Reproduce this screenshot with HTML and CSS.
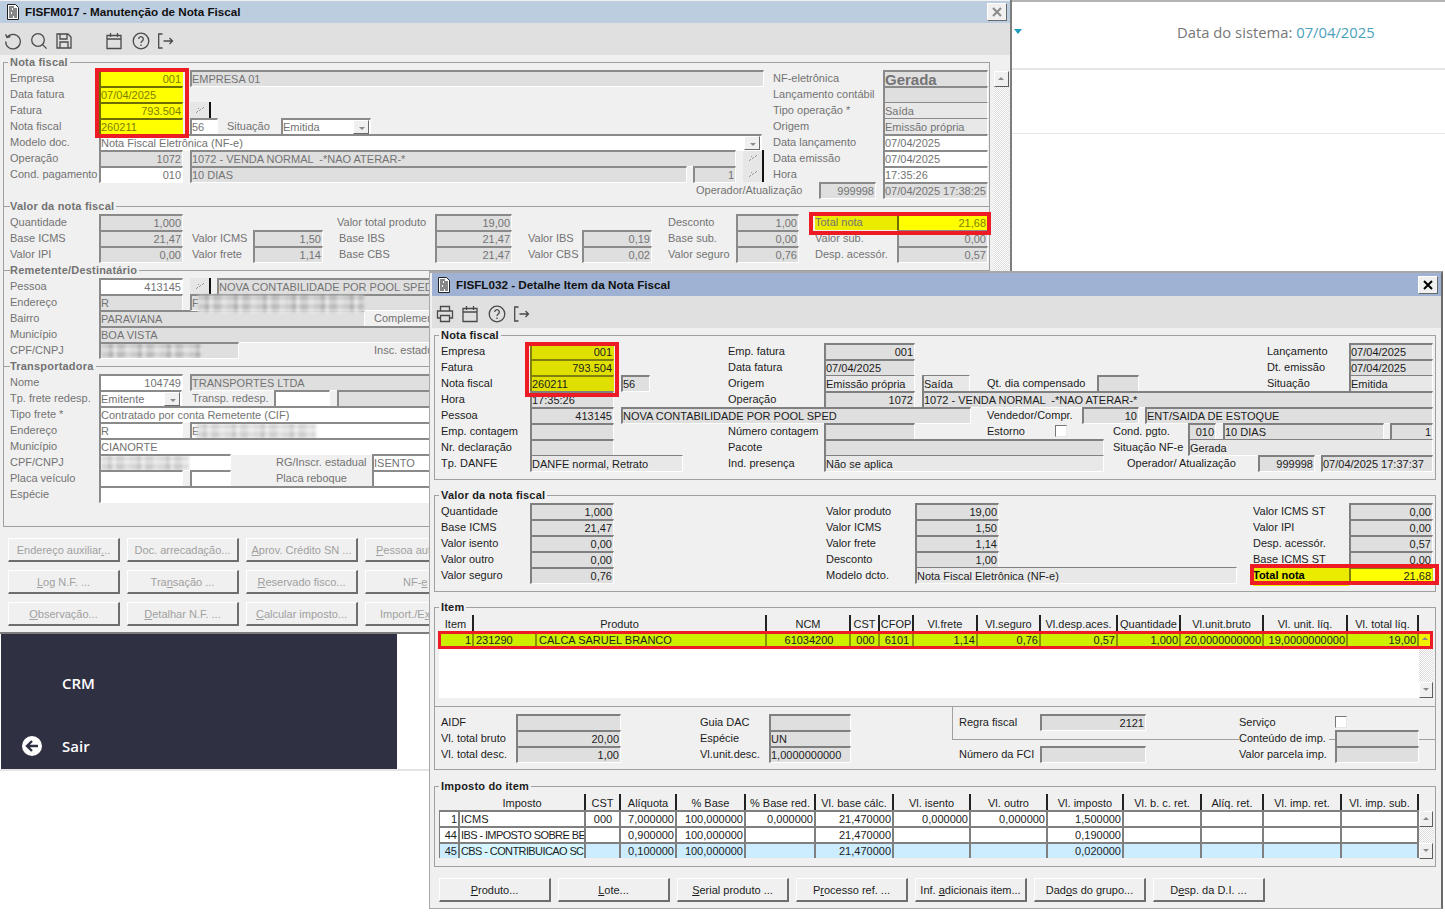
FILE: index.html
```html
<!DOCTYPE html>
<html>
<head>
    <meta charset="UTF-8">
    <title>FISFM017 - Manutenção de Nota Fiscal</title>
    <link rel="stylesheet" href="styles.css">
</head>
<body>
<div class="desktop">

    <!-- portal behind the windows -->
    <div class="portal">
        <div class="portal-head">
            <i class="caret"></i>
            <span class="sys-date">Data do sistema: <b>07/04/2025</b></span>
        </div>
        <div class="portal-line"></div>
    </div>
    <div class="menu">
        <div class="menu-item">CRM</div>
        <div class="menu-item">
            <svg class="back" viewBox="0 0 20 20"><circle cx="10" cy="10" r="10" fill="#fff"/><path d="M16 10H5M10 5l-5 5 5 5" fill="none" stroke="#2f3042" stroke-width="2.4"/></svg>
            Sair
        </div>
    </div>
    <div class="menu-rule"></div>

    <!-- FISFM017 -->
    <section class="win win-back">
        <div class="title">
            <svg class="doc" viewBox="0 0 12 16"><path d="M.5.5h8l3 3v12H.5z" fill="#fff" stroke="#222"/><path d="M2 3h5M2 5h3M6 5h4M2 7h8M2 9h2M5 9h5M2 11h8M2 13h4M7 13h3" stroke="#111" stroke-width="1.2"/></svg>
            <span>FISFM017 - Manutenção de Nota Fiscal</span>
            <button class="close">
                <svg viewBox="0 0 10 10"><path d="M1 1l8 8M9 1l-8 8" stroke="#8a8a8a" stroke-width="2"/></svg>
            </button>
        </div>
        <div class="tools">
            <svg class="ico" viewBox="0 0 18 18"><path d="M3.2 5.2A7.3 7.3 0 1 1 1.7 9.5M1.600 2.200l1.400 3.400 3.400-.9"/></svg>
            <svg class="ico" viewBox="0 0 18 18"><circle cx="8" cy="8" r="6.300"/><path d="M12.600 12.600l4 4"/></svg>
            <svg class="ico" viewBox="0 0 18 18"><path d="M1 2h11l3 3v11H1zM4 2v5h7V2M4 16v-6h8v6"/></svg>
            <svg class="ico gap-l" viewBox="0 0 18 18"><path d="M1 3.500h14v13H1zM1 7h14M4.500 1v4M11.500 1v4"/></svg>
            <svg class="ico" viewBox="0 0 18 18"><circle cx="9" cy="9" r="7.800"/><path d="M6.700 7a2.300 2.300 0 1 1 3.500 2c-.9.6-1.200 1-1.200 2M9 12.500v1.500"/></svg>
            <svg class="ico" viewBox="0 0 18 18"><path d="M4.500 2H.7v14h3.800M5.500 9h9M11.500 6l3 3-3 3"/></svg>
        </div>
        <div class="back-body">
            <div class="back-main">
                <fieldset class="box box-nf">
                    <legend>Nota fiscal</legend>
                    <div class="row"><span class="w-89">Empresa</span><span class="f yl r w-84">001</span><span class="f ml-7 w-574">EMPRESA 01</span><span class="rc w-110">NF-eletrônica</span><span class="f big w-105">Gerada</span></div>
                    <div class="row"><span class="w-89">Data fatura</span><span class="f yl w-84">07/04/2025</span><span class="rc w-110">Lançamento contábil</span><span class="f w-105"></span></div>
                    <div class="row"><span class="w-89">Fatura</span><span class="f yl r w-84">793.504</span><button class="pick ml-7"><svg viewBox="0 0 10 8"><path d="M1 7l2-2M4 5l2-2M7 3l2-2M3 3l1-1"/></svg></button><span class="rc w-110">Tipo operação *</span><span class="f lt w-105">Saída</span></div>
                    <div class="row"><span class="w-89">Nota fiscal</span><span class="f yl w-84">260211</span><span class="f wh ml-7 w-28">56</span><span class="ml-9 w-54">Situação</span><span class="f wh combo w-90">Emitida<i class="dd"></i></span><span class="rc w-110">Origem</span><span class="f lt w-105">Emissão própria</span></div>
                    <div class="row"><span class="w-89">Modelo doc.</span><span class="f wh combo w-663">Nota Fiscal Eletrônica (NF-e)<i class="dd"></i></span><span class="rc w-110">Data lançamento</span><span class="f wh w-105">07/04/2025</span></div>
                    <div class="row"><span class="w-89">Operação</span><span class="f r w-84">1072</span><span class="f ml-7 w-546">1072 - VENDA NORMAL  -*NAO ATERAR-*</span><button class="pick ml-7"><svg viewBox="0 0 10 8"><path d="M1 7l2-2M4 5l2-2M7 3l2-2M3 3l1-1"/></svg></button><span class="rc w-110">Data emissão</span><span class="f wh w-105">07/04/2025</span></div>
                    <div class="row"><span class="w-89">Cond. pagamento</span><span class="f wh r w-84">010</span><span class="f ml-7 w-497">10 DIAS</span><span class="f r ml-6 w-43">1</span><button class="pick ml-7"><svg viewBox="0 0 10 8"><path d="M1 7l2-2M4 5l2-2M7 3l2-2M3 3l1-1"/></svg></button><span class="rc w-110">Hora</span><span class="f wh w-105">17:35:26</span></div>
                    <div class="row end"><span class="w-123">Operador/Atualização</span><span class="f r w-57">999998</span><span class="f ml-7 w-105">07/04/2025 17:38:25</span></div>

                    <div class="sect">Valor da nota fiscal</div>
                    <div class="row"><span class="w-89">Quantidade</span><span class="f r w-84">1,000</span><span class="ml-154 w-98">Valor total produto</span><span class="f r w-77">19,00</span><span class="ml-156 w-68">Desconto</span><span class="f r w-63">1,00</span><span class="ml-16 w-82 hl">Total nota</span><span class="f yl r w-91">21,68</span></div>
                    <div class="row"><span class="w-89">Base ICMS</span><span class="f r w-84">21,47</span><span class="ml-9 w-61">Valor ICMS</span><span class="f r w-70">1,50</span><span class="ml-16 w-96">Base IBS</span><span class="f r w-77">21,47</span><span class="ml-16 w-54">Valor IBS</span><span class="f r w-70">0,19</span><span class="ml-16 w-68">Base sub.</span><span class="f r w-63">0,00</span><span class="ml-16 w-82">Valor sub.</span><span class="f r w-91">0,00</span></div>
                    <div class="row"><span class="w-89">Valor IPI</span><span class="f r w-84">0,00</span><span class="ml-9 w-61">Valor frete</span><span class="f r w-70">1,14</span><span class="ml-16 w-96">Base CBS</span><span class="f r w-77">21,47</span><span class="ml-16 w-54">Valor CBS</span><span class="f r w-70">0,02</span><span class="ml-16 w-68">Valor seguro</span><span class="f r w-63">0,76</span><span class="ml-16 w-82">Desp. acessór.</span><span class="f r w-91">0,57</span></div>

                    <div class="sect">Remetente/Destinatário</div>
                    <div class="row"><span class="w-89">Pessoa</span><span class="f wh r w-84">413145</span><button class="pick ml-7"><svg viewBox="0 0 10 8"><path d="M1 7l2-2M4 5l2-2M7 3l2-2M3 3l1-1"/></svg></button><span class="f ml-6 w-547">NOVA CONTABILIDADE POR POOL SPED</span></div>
                    <div class="row"><span class="w-89">Endereço</span><span class="f w-84">R</span><span class="f open ml-7 w-574">F<i class="smear sm-a"></i></span></div>
                    <div class="row"><span class="w-89">Bairro</span><span class="f w-266">PARAVIANA</span><span class="ml-9 w-55">Complemen</span></div>
                    <div class="row"><span class="w-89">Município</span><span class="f w-665">BOA VISTA</span></div>
                    <div class="row"><span class="w-89">CPF/CNPJ</span><span class="f w-140"><i class="smear sm-b"></i></span><span class="ml-135 w-55">Insc. estadu</span></div>

                    <div class="sect">Transportadora</div>
                    <div class="row"><span class="w-89">Nome</span><span class="f wh r w-84">104749</span><span class="f ml-7 w-574">TRANSPORTES LTDA</span></div>
                    <div class="row"><span class="w-89">Tp. frete redesp.</span><span class="f wh combo w-83">Emitente<i class="dd"></i></span><span class="ml-10 w-82">Transp. redesp.</span><span class="f wh w-56"></span><span class="f ml-7 w-427"></span></div>
                    <div class="row"><span class="w-89">Tipo frete *</span><span class="f wh combo w-665">Contratado por conta Remetente (CIF)</span></div>
                    <div class="row"><span class="w-89">Endereço</span><span class="f wh w-84">R</span><span class="f wh ml-7 w-574">E<i class="smear sm-c"></i></span></div>
                    <div class="row"><span class="w-89">Município</span><span class="f wh w-665">CIANORTE</span></div>
                    <div class="row"><span class="w-89">CPF/CNPJ</span><span class="f wh w-132"><i class="smear sm-d"></i></span><span class="ml-45 w-96">RG/Inscr. estadual</span><span class="f wh w-392">ISENTO</span></div>
                    <div class="row"><span class="w-89">Placa veículo</span><span class="f wh w-84"></span><span class="f wh ml-7 w-41"></span><span class="ml-45 w-96">Placa reboque</span><span class="f wh w-392"></span></div>
                    <div class="row"><span class="w-89">Espécie</span><span class="f wh w-665"></span></div>
                </fieldset>

                <div class="btns btns-back">
                    <button class="btn">Endereço auxiliar<u>.</u>..</button>
                    <button class="btn">Doc. arrecada<u>ç</u>ão...</button>
                    <button class="btn"><u>A</u>prov. Crédito SN ...</button>
                    <button class="btn pl-10"><u>P</u>essoa aut</button>
                    <button class="btn"><u>L</u>og N.F. ...</button>
                    <button class="btn">Tra<u>n</u>sação ...</button>
                    <button class="btn"><u>R</u>eservado fisco...</button>
                    <button class="btn pl-37">NF-<u>e</u></button>
                    <button class="btn"><u>O</u>bservação...</button>
                    <button class="btn"><u>D</u>etalhar N.F. ...</button>
                    <button class="btn"><u>C</u>alcular imposto...</button>
                    <button class="btn pl-14">Import./E<u>x</u>p</button>
                </div>
            </div>
            <div class="sb sb-back">
                <i class="sb-btn up"></i>
            </div>
        </div>
    </section>

    <!-- FISFL032 -->
    <section class="win win-front">
        <div class="title">
            <svg class="doc" viewBox="0 0 12 16"><path d="M.5.5h8l3 3v12H.5z" fill="#fff" stroke="#222"/><path d="M2 3h5M2 5h3M6 5h4M2 7h8M2 9h2M5 9h5M2 11h8M2 13h4M7 13h3" stroke="#111" stroke-width="1.2"/></svg>
            <span>FISFL032 - Detalhe Item da Nota Fiscal</span>
            <button class="close">
                <svg viewBox="0 0 10 10"><path d="M1 1l8 8M9 1l-8 8" stroke="#000" stroke-width="2"/></svg>
            </button>
        </div>
        <div class="tools">
            <svg class="ico" viewBox="0 0 18 18"><path d="M4.500 6V1.500h9V6M4 13H1.500V6h15v7H14M4.500 10.500h9v6h-9z"/></svg>
            <svg class="ico" viewBox="0 0 18 18"><path d="M1 3.500h14v13H1zM1 7h14M4.500 1v4M11.500 1v4"/></svg>
            <svg class="ico" viewBox="0 0 18 18"><circle cx="9" cy="9" r="7.800"/><path d="M6.700 7a2.300 2.300 0 1 1 3.500 2c-.9.6-1.200 1-1.200 2M9 12.500v1.500"/></svg>
            <svg class="ico" viewBox="0 0 18 18"><path d="M4.500 2H.7v14h3.800M5.500 9h9M11.500 6l3 3-3 3"/></svg>
        </div>

        <fieldset class="box box-f1">
            <legend>Nota fiscal</legend>
            <div class="row"><span class="w-89">Empresa</span><span class="f yl r w-84">001</span><span class="ml-114 w-96">Emp. fatura</span><span class="f r w-91">001</span><span class="ml-352 w-82">Lançamento</span><span class="f w-84">07/04/2025</span></div>
            <div class="row"><span class="w-89">Fatura</span><span class="f yl r w-84">793.504</span><span class="ml-114 w-96">Data fatura</span><span class="f w-91">07/04/2025</span><span class="ml-352 w-82">Dt. emissão</span><span class="f w-84">07/04/2025</span></div>
            <div class="row"><span class="w-89">Nota fiscal</span><span class="f yl w-84">260211</span><span class="f ml-7 w-29">56</span><span class="ml-78 w-96">Origem</span><span class="f lt w-91">Emissão própria</span><span class="f lt ml-7 w-48">Saída</span><span class="ml-17 w-110">Qt. dia compensado</span><span class="f w-42"></span><span class="ml-128 w-82">Situação</span><span class="f lt w-84">Emitida</span></div>
            <div class="row"><span class="w-89">Hora</span><span class="f w-84">17:35:26</span><span class="ml-114 w-96">Operação</span><span class="f r w-91">1072</span><span class="f ml-7 w-511">1072 - VENDA NORMAL  -*NAO ATERAR-*</span></div>
            <div class="row"><span class="w-89">Pessoa</span><span class="f r w-84">413145</span><span class="f ml-7 w-350">NOVA CONTABILIDADE POR POOL SPED</span><span class="ml-16 w-95">Vendedor/Compr.</span><span class="f r w-57">10</span><span class="f ml-6 w-288">ENT/SAIDA DE ESTOQUE</span></div>
            <div class="row"><span class="w-89">Emp. contagem</span><span class="f w-84"></span><span class="ml-114 w-96">Número contagem</span><span class="f w-91"></span><span class="ml-72 w-68">Estorno</span><i class="chk"></i><span class="ml-46 w-75">Cond. pgto.</span><span class="f r w-28">010</span><span class="f ml-7 w-161">10 DIAS</span><span class="f r ml-6 w-43">1</span></div>
            <div class="row"><span class="w-89">Nr. declaração</span><span class="f w-84"></span><span class="ml-114 w-96">Pacote</span><span class="f w-280"></span><span class="ml-9 w-75">Situação NF-e</span><span class="f lt w-245">Gerada</span></div>
            <div class="row"><span class="w-89">Tp. DANFE</span><span class="f lt w-153">DANFE normal, Retrato</span><span class="ml-45 w-96">Ind. presença</span><span class="f lt w-280">Não se aplica</span><span class="ml-23 w-131">Operador/ Atualização</span><span class="f r w-57">999998</span><span class="f ml-6 w-112">07/04/2025 17:37:37</span></div>
        </fieldset>

        <fieldset class="box box-f2">
            <legend>Valor da nota fiscal</legend>
            <div class="row"><span class="w-89">Quantidade</span><span class="f r w-84">1,000</span><span class="ml-212 w-89">Valor produto</span><span class="f r w-84">19,00</span><span class="ml-254 w-96">Valor ICMS ST</span><span class="f r w-84">0,00</span></div>
            <div class="row"><span class="w-89">Base ICMS</span><span class="f r w-84">21,47</span><span class="ml-212 w-89">Valor ICMS</span><span class="f r w-84">1,50</span><span class="ml-254 w-96">Valor IPI</span><span class="f r w-84">0,00</span></div>
            <div class="row"><span class="w-89">Valor isento</span><span class="f r w-84">0,00</span><span class="ml-212 w-89">Valor frete</span><span class="f r w-84">1,14</span><span class="ml-254 w-96">Desp. acessór.</span><span class="f r w-84">0,57</span></div>
            <div class="row"><span class="w-89">Valor outro</span><span class="f r w-84">0,00</span><span class="ml-212 w-89">Desconto</span><span class="f r w-84">1,00</span><span class="ml-254 w-96">Base ICMS ST</span><span class="f r w-84">0,00</span></div>
            <div class="row"><span class="w-89">Valor seguro</span><span class="f r w-84">0,76</span><span class="ml-212 w-89">Modelo dcto.</span><span class="f lt w-322">Nota Fiscal Eletrônica (NF-e)</span><span class="ml-16 w-96 hl total">Total nota</span><span class="f yl r w-84">21,68</span></div>
        </fieldset>

        <fieldset class="box box-f3">
            <legend>Item</legend>
            <div class="tbl">
                <div class="grid item-grid">
                    <b class="th">Item</b><b class="th span-2">Produto</b><b class="th">NCM</b><b class="th">CST</b><b class="th">CFOP</b><b class="th">Vl.frete</b><b class="th">Vl.seguro</b><b class="th">Vl.desp.aces.</b><b class="th">Quantidade</b><b class="th">Vl.unit.bruto</b><b class="th">Vl. unit. líq.</b><b class="th">Vl. total líq.</b>
                    <span class="td r sel">1</span><span class="td sel">231290</span><span class="td sel">CALCA SARUEL BRANCO</span><span class="td c sel">61034200</span><span class="td c sel">000</span><span class="td c sel">6101</span><span class="td r sel">1,14</span><span class="td r sel">0,76</span><span class="td r sel">0,57</span><span class="td r sel">1,000</span><span class="td r sel">20,0000000000</span><span class="td r sel">19,0000000000</span><span class="td r sel">19,00</span>
                </div>
                <div class="sb sb-item"><i class="sb-btn up tint"></i><i class="sb-btn down"></i></div>
            </div>
        </fieldset>

        <div class="box box-mid">
            <div class="row"><span class="w-75">AIDF</span><span class="f w-105"></span><span class="ml-79 w-69">Guia DAC</span><span class="f w-82"></span><span class="ml-108 w-81">Regra fiscal</span><span class="f r w-106">2121</span><span class="ml-93 w-96">Serviço</span><i class="chk"></i></div>
            <div class="row"><span class="w-75">Vl. total bruto</span><span class="f r w-105">20,00</span><span class="ml-79 w-69">Espécie</span><span class="f w-82">UN</span><span class="ml-388 w-96 cut"><em>Conteúdo de imp.</em></span><span class="f w-84"></span></div>
            <div class="row"><span class="w-75">Vl. total desc.</span><span class="f r w-105">1,00</span><span class="ml-79 w-69">Vl.unit.desc.</span><span class="f w-82">1,0000000000</span><span class="ml-108 w-81">Número da FCI</span><span class="f w-106"></span><span class="ml-93 w-96">Valor parcela imp.</span><span class="f w-84"></span></div>
        </div>

        <fieldset class="box box-f4">
            <legend>Imposto do item</legend>
            <div class="tbl">
                <div class="grid tax-grid">
                    <b class="th blank"></b><b class="th">Imposto</b><b class="th">CST</b><b class="th">Alíquota</b><b class="th">% Base</b><b class="th">% Base red.</b><b class="th">Vl. base cálc.</b><b class="th">Vl. isento</b><b class="th">Vl. outro</b><b class="th">Vl. imposto</b><b class="th">Vl. b. c. ret.</b><b class="th">Alíq. ret.</b><b class="th">Vl. imp. ret.</b><b class="th">Vl. imp. sub.</b>
                    <span class="tx r">1</span><span class="tx">ICMS</span><span class="tx c">000</span><span class="tx r">7,000000</span><span class="tx r">100,000000</span><span class="tx r">0,000000</span><span class="tx r">21,470000</span><span class="tx r">0,000000</span><span class="tx r">0,000000</span><span class="tx r">1,500000</span><span class="tx"></span><span class="tx"></span><span class="tx"></span><span class="tx"></span>
                    <span class="tx r">44</span><span class="tx tight">IBS - IMPOSTO SOBRE BE</span><span class="tx"></span><span class="tx r">0,900000</span><span class="tx r">100,000000</span><span class="tx"></span><span class="tx r">21,470000</span><span class="tx"></span><span class="tx"></span><span class="tx r">0,190000</span><span class="tx"></span><span class="tx"></span><span class="tx"></span><span class="tx"></span>
                    <span class="tx r blue">45</span><span class="tx blue pale tight">CBS - CONTRIBUICAO SC</span><span class="tx blue"></span><span class="tx r blue">0,100000</span><span class="tx r blue">100,000000</span><span class="tx blue"></span><span class="tx r blue">21,470000</span><span class="tx blue"></span><span class="tx blue"></span><span class="tx r blue">0,020000</span><span class="tx blue"></span><span class="tx blue"></span><span class="tx blue"></span><span class="tx blue"></span>
                </div>
                <div class="sb sb-tax"><i class="sb-btn up"></i><i class="sb-btn down"></i></div>
            </div>
        </fieldset>

        <div class="btns btns-front">
            <button class="btn"><u>P</u>roduto...</button>
            <button class="btn"><u>L</u>ote...</button>
            <button class="btn"><u>S</u>erial produto ...</button>
            <button class="btn">P<u>r</u>ocesso ref. ...</button>
            <button class="btn">Inf. <u>a</u>dicionais item...</button>
            <button class="btn">Dad<u>o</u>s do grupo...</button>
            <button class="btn">D<u>e</u>sp. da D.I. ...</button>
        </div>
    </section>

    <!-- red call-outs drawn over the screenshot -->
    <i class="mark mk-1"></i>
    <i class="mark mk-2"></i>
    <i class="mark mk-3"></i>
    <i class="mark mk-4"></i>
    <i class="mark mk-5"></i>
</div>
</body>
</html>
```

FILE: styles.css
```css
* {
    box-sizing: border-box;
}
html, body {
    margin: 0;
    height: 100%;
    background: #fff;
    overflow: hidden;
}
body {
    font-family: "Liberation Sans", Arial, sans-serif;
    font-size: 11px;
    line-height: 16px;
}
.desktop {
    position: relative;
    width: 1445px;
    height: 914px;
    overflow: hidden;
}

/* portal */
.portal {
    position: absolute;
    left: 1012px;
    top: 0;
    width: 433px;
    border-top: 2px solid #b4b4b4;
}
.portal-head {
    height: 68px;
    padding: 20px 0 0 165px;
    border-bottom: 2px solid #e6e6e6;
    font-family: "Open Sans", sans-serif;
    font-size: 14.8px;
    line-height: 20px;
    color: #777;
}
.portal-head b {
    font-weight: 400;
    color: #4a9fba;
}
.caret {
    position: absolute;
    left: 2px;
    top: 27px;
    border: 4px solid transparent;
    border-top: 5px solid #1f9fc0;
}
.sys-date {
    white-space: nowrap;
}
.portal-line {
    height: 64px;
    border-bottom: 1px solid #e6e6e6;
}
.menu {
    position: absolute;
    left: 1px;
    top: 634px;
    width: 396px;
    height: 135px;
    padding: 41px 0 0 61px;
    background: #2f3042;
    color: #fff;
    font-family: "Open Sans", sans-serif;
    font-size: 15px;
    font-weight: 600;
}
.menu-item {
    position: relative;
    height: 32px;
    margin-bottom: 31px;
}
.back {
    position: absolute;
    left: -40px;
    top: -2px;
    width: 20px;
    height: 20px;
}
.menu-rule {
    position: absolute;
    left: 0;
    top: 769px;
    width: 430px;
    height: 2px;
    background: #e4e4e4;
}

/* windows */
.win {
    position: absolute;
    background: #f0f0f0;
}
.win-back {
    z-index: 1;
    left: 0;
    top: 0;
    width: 1012px;
    height: 634px;
    padding-top: 1px;
    border-right: 2px solid #7d7d7d;
    border-bottom: 2px solid #7d7d7d;
    color: #737373;
}
.win-front {
    z-index: 2;
    left: 429px;
    top: 271px;
    width: 1014px;
    height: 638px;
    padding: 0 0 0 2px;
    border: 1px solid #a8a8a8;
    border-top: 2px solid #a8a8a8;
    border-right: 2px solid #6a6a6a;
    color: #1c1c1c;
}
.title {
    display: flex;
    align-items: center;
    height: 22px;
    padding-left: 7px;
    background: #bccde0;
    font-size: 11.7px;
    font-weight: bold;
    color: #111;
}
.win-front .title {
    height: 23px;
    padding-left: 6px;
    background: #9fb2d3;
}
.doc {
    width: 12px;
    height: 16px;
    margin-right: 6px;
}
.close {
    width: 20px;
    height: 18px;
    margin: 0 3px 0 auto;
    padding: 3px 4px;
    background: #f0f0f0;
    border: 1px solid;
    border-color: #fff #6a6a6a #6a6a6a #fff;
}
.close svg {
    display: block;
    width: 10px;
    height: 10px;
}
.tools {
    display: flex;
    align-items: center;
    gap: 8px;
    height: 32px;
    padding: 4px 0 0 4px;
    background: #e0e0e0;
}
.ico {
    width: 18px;
    height: 18px;
    fill: none;
    stroke: #4a4a4a;
    stroke-width: 1.3;
}
.gap-l {
    margin-left: 24px;
}
.back-body {
    display: flex;
}
.back-main {
    width: 994px;
}

/* group boxes */
.box {
    margin: 0;
    min-width: 0;
    border: 1px solid #a0a0a0;
}
fieldset.box {
    padding: 0 1px 0 6px;
}
legend {
    margin-left: -2px;
    padding: 0 2px;
    height: 16px;
    font-size: 11px;
    font-weight: bold;
    letter-spacing: .2px;
}
.box-nf {
    width: 987px;
    height: 473px;
    margin: -1px 0 0 3px;
    padding-bottom: 24px;
}
.win-front .box {
    width: 1002px;
    margin-left: 2px;
}
.box-f1 {
    height: 153px;
    margin-top: -1px !important;
}
.box-f2 {
    height: 105px;
    margin-top: 7px !important;
}
.box-f3 {
    height: 108px;
    margin-top: 7px !important;
}
.box-mid {
    position: relative;
    height: 64px;
    margin-top: -1px;
    padding: 7px 0 0 6px;
}
.box-mid::before {
    content: "";
    position: absolute;
    left: 517px;
    top: 0;
    right: 0;
    height: 32px;
    border-left: 1px solid #a0a0a0;
    border-bottom: 1px solid #a0a0a0;
}
.box-mid .row {
    position: relative;
}
.box-f4 {
    height: 89px;
    margin-top: 8px !important;
}
fieldset.box-f3, fieldset.box-f4 {
    padding-left: 4px;
}
fieldset.box-f3 legend, fieldset.box-f4 legend {
    margin-left: 0;
}
.sect {
    display: flex;
    align-items: center;
    height: 16px;
    margin: 0 -1px 0 -6px;
    font-weight: bold;
    letter-spacing: .2px;
    white-space: nowrap;
}
.sect::before {
    content: "";
    width: 6px;
    border-top: 1px solid #a0a0a0;
}
.sect::after {
    content: "";
    flex: 1;
    margin-left: 2px;
    border-top: 1px solid #a0a0a0;
}

/* form rows */
.row {
    display: flex;
    height: 16px;
    white-space: nowrap;
}
.row > * {
    flex: none;
}
.row.end {
    justify-content: flex-end;
}
.rc {
    margin-left: auto;
}
.f {
    position: relative;
    height: 17px;
    padding: 0;
    overflow: hidden;
    background: #dfdfdf;
    border-style: solid;
    border-width: 2px 1px 1px 2px;
    border-color: #8a8a8a #fff #fff #8a8a8a;
    line-height: 15px;
    white-space: pre;
}
.win-front .f {
    border-color: #808080 #fff #fff #808080;
}
.f.r {
    padding-right: 1px;
    text-align: right;
}
.open {
    overflow: visible;
    z-index: 1;
}
.wh {
    background: #fff;
}
.yl {
    background: #ff0;
    color: #7d7d00;
    border-color: #6e6e00 #ff0 #ff0 #6e6e00;
}
.win-front .yl {
    background: #e0e000;
    color: #222;
    border-color: #80800b #e0e000 #e0e000 #80800b;
}
.lt {
    background: #e8e8e8;
    border-top-width: 1px;
    padding-top: 1px;
}
.big {
    font-size: 15px;
    font-weight: bold;
}
.hl {
    background: #ebeb00;
}
.total {
    height: 20px;
    margin-top: -1px;
    line-height: 19px;
    font-weight: bold;
    color: #000;
}
.win-front .f.yl.r:last-child {
    background: #ff0;
}
.combo {
    padding-right: 18px;
}
.dd {
    position: absolute;
    right: 1px;
    top: 0;
    width: 16px;
    height: 14px;
    background: #f0f0f0;
    border: 1px solid;
    border-color: #fff #6a6a6a #6a6a6a #fff;
}
.dd::after {
    content: "";
    position: absolute;
    left: 5px;
    top: 6px;
    border: 3px solid transparent;
    border-top: 3px solid #8a8a8a;
    border-bottom: 0;
}
.pick {
    flex: none;
    width: 21px;
    height: 16px;
    padding: 0;
    background: #e6e6e6;
    border: 0;
    border-right: 2px solid #111;
}
.pick svg {
    display: block;
    width: 10px;
    height: 8px;
    margin: 0 auto;
    fill: none;
    stroke: #9a9a9a;
}
.chk {
    width: 12px;
    height: 12px;
    margin-top: 2px;
    background: #fff;
    border: 1px solid;
    border-color: #777 #e8e8e8 #e8e8e8 #777;
}
.cut em {
    font-style: normal;
    background: #f0f0f0;
    padding-right: 3px;
}
.smear {
    position: absolute;
    height: 17px;
    filter: blur(1.6px);
    background:
        repeating-linear-gradient(0deg, rgba(255,255,255,.35) 0 4px, rgba(120,120,120,.12) 4px 9px),
        repeating-linear-gradient(90deg, #d2d2d2 0 7px, #b2b2b2 7px 11px, #e6e6e6 11px 15px, #c2c2c2 15px 23px, #dedede 23px 29px);
}
.sm-a {
    left: 6px;
    top: -1px;
    width: 166px;
    height: 18px;
}
.sm-b {
    left: 1px;
    top: 0;
    width: 100px;
}
.sm-c {
    left: 4px;
    top: 0;
    width: 120px;
    opacity: .7;
}
.sm-d {
    left: 0;
    top: 0;
    width: 88px;
    opacity: .75;
}

/* grids */
.tbl {
    display: flex;
}
.grid {
    display: grid;
    align-content: start;
    background: #fff;
}
.item-grid {
    width: 980px;
    height: 83px;
    grid-template-columns: 35px 63px 230px 84px 29px 34px 64px 63px 77px 63px 83px 84px 71px;
    grid-auto-rows: 16px;
    grid-template-rows: 17px;
}
.tax-grid {
    width: 980px;
    height: 64px;
    grid-template-columns: 21px 126px 35px 56px 69px 70px 78px 77px 77px 76px 78px 62px 78px 77px;
    grid-auto-rows: 16px;
}
.th {
    font-weight: 400;
    line-height: 18px;
    text-align: center;
    background: #f0f0f0;
    border-right: 2px solid #222;
    white-space: nowrap;
    overflow: hidden;
}
.th.blank {
    border-right: 0;
}
.span-2 {
    grid-column: span 2;
}
.td, .tx {
    padding-left: 2px;
    overflow: hidden;
    white-space: nowrap;
    border-right: 2px solid #7f7f7f;
    background: #fff;
}
.tx {
    border-top: 2px solid #7f7f7f;
    line-height: 14px;
    padding-left: 1px;
}
.tx:nth-child(14n+1) {
    border-left: 1px solid #7f7f7f;
}
.td.r, .tx.r {
    padding: 0 1px 0 0;
    text-align: right;
}
.c {
    text-align: center;
}
.tight {
    letter-spacing: -.6px;
}
.sel {
    background: #ccf000;
    border-color: #8a9400;
}
.blue {
    background: #ccecff;
}
.pale {
    background: #d6f6ff;
}

/* scrollbars */
.sb {
    display: flex;
    flex-direction: column;
    justify-content: space-between;
    width: 14px;
    background: repeating-conic-gradient(#fff 0 25%, #dcdcdc 0 50%) 0 0 / 2px 2px;
}
.sb-back {
    width: 15px;
    height: 480px;
    margin: 16px 0 0 0;
}
.sb-item {
    height: 66px;
    margin-top: 17px;
}
.sb-tax {
    height: 48px;
    margin-top: 17px;
}
.sb-btn {
    position: relative;
    flex: none;
    height: 16px;
    background: #f0f0f0;
    border: 1px solid;
    border-color: #fff #5e5e5e #5e5e5e #fff;
}
.sb-btn.tint {
    background: #f0f000;
    border: 0;
}
.sb-btn::after {
    content: "";
    position: absolute;
    left: 3px;
    top: 5px;
    border: 3px solid transparent;
    border-top: 0;
    border-bottom: 3px solid #8a8a8a;
}
.sb-btn.down::after {
    border-bottom: 0;
    border-top: 3px solid #8a8a8a;
}

/* buttons */
.btns {
    display: grid;
    grid-template-columns: repeat(7, 112px);
    gap: 8px 7px;
}
.btns-back {
    grid-template-columns: repeat(4, 112px);
    grid-auto-rows: 24px;
    margin: 11px 0 0 8px;
}
.btns-front {
    grid-auto-rows: 24px;
    margin: 11px 0 0 7px;
}
.btn {
    padding: 0;
    font: inherit;
    color: #a0a0a0;
    background: #f0f0f0;
    white-space: nowrap;
    overflow: hidden;
    border-style: solid;
    border-width: 1px 2px 2px 1px;
    border-color: #fff #6e6e6e #6e6e6e #fff;
}
.win-front .btn {
    color: #1c1c1c;
}
.pl-10, .pl-14, .pl-37 {
    text-align: left;
}
.pl-10 { padding-left: 10px; }
.pl-14 { padding-left: 14px; }
.pl-37 { padding-left: 37px; }

/* red call-outs */
.mark {
    position: absolute;
    z-index: 3;
    border: 4px solid #ed1c24;
}
.mk-1 {
    left: 95px;
    top: 68px;
    width: 94px;
    height: 70px;
}
.mk-2 {
    left: 809px;
    top: 212px;
    width: 182px;
    height: 23px;
}
.mk-3 {
    left: 525px;
    top: 342px;
    width: 94px;
    height: 55px;
}
.mk-4 {
    left: 1250px;
    top: 564px;
    width: 189px;
    height: 21px;
}
.mk-5 {
    left: 438px;
    top: 631px;
    width: 995px;
    height: 18px;
    border-width: 3px;
}

/* sizes */
.w-28 { width: 28px; } .w-29 { width: 29px; } .w-41 { width: 41px; }
.w-42 { width: 42px; } .w-43 { width: 43px; } .w-48 { width: 48px; } .w-54 { width: 54px; } .w-55 { width: 55px; }
.w-56 { width: 56px; } .w-57 { width: 57px; } .w-61 { width: 61px; } .w-63 { width: 63px; }
.w-68 { width: 68px; } .w-69 { width: 69px; } .w-70 { width: 70px; } .w-75 { width: 75px; }
.w-77 { width: 77px; } .w-81 { width: 81px; } .w-82 { width: 82px; } .w-83 { width: 83px; }
.w-84 { width: 84px; } .w-89 { width: 89px; } .w-90 { width: 90px; } .w-91 { width: 91px; }
.w-95 { width: 95px; } .w-96 { width: 96px; } .w-98 { width: 98px; } .w-105 { width: 105px; }
.w-106 { width: 106px; } .w-110 { width: 110px; } .w-112 { width: 112px; } .w-123 { width: 123px; }
.w-131 { width: 131px; } .w-132 { width: 132px; } .w-140 { width: 140px; } .w-153 { width: 153px; }
.w-161 { width: 161px; } .w-245 { width: 245px; } .w-266 { width: 266px; } .w-280 { width: 280px; }
.w-288 { width: 288px; } .w-322 { width: 322px; } .w-350 { width: 350px; } .w-392 { width: 392px; }
.w-427 { width: 427px; } .w-497 { width: 497px; } .w-511 { width: 511px; } .w-546 { width: 546px; }
.w-547 { width: 547px; } .w-574 { width: 574px; } .w-663 { width: 663px; } .w-665 { width: 665px; }
.ml-6 { margin-left: 6px; } .ml-7 { margin-left: 7px; } .ml-9 { margin-left: 9px; } .ml-10 { margin-left: 10px; }
.ml-16 { margin-left: 16px; } .ml-17 { margin-left: 17px; } .ml-23 { margin-left: 23px; } .ml-45 { margin-left: 45px; }
.ml-46 { margin-left: 46px; } .ml-72 { margin-left: 72px; } .ml-78 { margin-left: 78px; } .ml-79 { margin-left: 79px; }
.ml-93 { margin-left: 93px; } .ml-108 { margin-left: 108px; } .ml-114 { margin-left: 114px; } .ml-128 { margin-left: 128px; }
.ml-135 { margin-left: 135px; } .ml-154 { margin-left: 154px; } .ml-156 { margin-left: 156px; } .ml-212 { margin-left: 212px; }
.ml-254 { margin-left: 254px; } .ml-352 { margin-left: 352px; } .ml-388 { margin-left: 388px; }
```
